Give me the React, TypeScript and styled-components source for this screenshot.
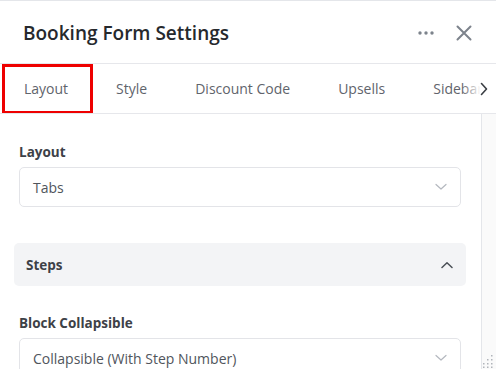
import React from "react";
import styled, { createGlobalStyle } from "styled-components";

const Global = createGlobalStyle`
  html, body { margin: 0; padding: 0; background: #fff; }
  body { font-family: "Open Sans", "Noto Sans", sans-serif; }
  *, *::before, *::after { box-sizing: border-box; }
`;

const Panel = styled.div`
  width: 496px;
  height: 369px;
  overflow: hidden;
  border-top: 1px solid #e4e6ea;
  display: flex;
  flex-direction: column;
  background: #fff;
  position: relative;
`;

const Header = styled.div`
  height: 63px;
  display: flex;
  align-items: center;
  padding: 1px 24px 0 23px;
  border-bottom: 1px solid #e6e7eb;
`;

const Title = styled.h1`
  margin: 0;
  flex: 1;
  font-size: 19px;
  font-weight: 600;
  color: #26292d;
`;

const HeaderActions = styled.div`
  display: flex;
  align-items: center;
  gap: 22px;
`;

const IconBtn = styled.span`
  display: inline-flex;
  align-items: center;
  justify-content: center;
  color: #7d838c;
`;

const TabBar = styled.div`
  height: 50px;
  display: flex;
  align-items: stretch;
  border-bottom: 1px solid #e6e7eb;
  position: relative;
  overflow: hidden;
`;

const Tab = styled.div<{ $active?: boolean }>`
  flex: none;
  padding: 0 24px;
  display: flex;
  align-items: center;
  font-size: 14px;
  color: #5f646c;
  white-space: nowrap;
  position: relative;
  ${(p) =>
    p.$active &&
    `
    &::after {
      content: "";
      position: absolute;
      left: 2px;
      top: 0;
      width: 91px;
      height: 50px;
      border: 3px solid #ee0000;
    }
  `}
`;

const Fade = styled.div`
  position: absolute;
  right: 0;
  top: 0;
  bottom: 0;
  width: 34px;
  background: linear-gradient(to right, rgba(255,255,255,0) 0%, #fff 55%);
  display: flex;
  align-items: center;
  justify-content: flex-end;
  padding-right: 8px;
  color: #3a3e44;
`;

const Body = styled.div`
  flex: 1;
  display: flex;
  min-height: 0;
`;

const Content = styled.div`
  flex: 1;
  padding: 29px 20px 0 19px;
`;

const Scrollbar = styled.div`
  width: 15px;
  border-left: 1px solid #e4e6ea;
  background: #fafafa;
  position: relative;
`;

const Grip = styled.svg`
  position: absolute;
  right: 3px;
  bottom: 1px;
`;

const Field = styled.div`
  display: flex;
  flex-direction: column;
  gap: 6px;
`;

const Label = styled.div`
  font-size: 13.5px;
  font-weight: 700;
  color: #3d4147;
`;

const Select = styled.div`
  height: 40px;
  flex: none;
  border: 1px solid #e3e4e8;
  border-radius: 5px;
  display: flex;
  align-items: center;
  padding: 0 13px 0 13px;
  font-size: 14px;
  color: #50555c;
`;

const SelectText = styled.span`
  flex: 1;
`;

const Accordion = styled.div`
  margin: 36px -5px 28px -5px;
  height: 43px;
  background: #f3f4f6;
  border-radius: 5px;
  display: flex;
  align-items: center;
  padding: 0 13px 0 12px;
`;

const AccordionTitle = styled.span`
  flex: 1;
  font-size: 13.5px;
  font-weight: 700;
  color: #3d4147;
`;

const ChevronDown = () => (
  <svg width="12" height="8" viewBox="0 0 12 8" fill="none">
    <path d="M1 1.5 L6 6 L11 1.5" stroke="#b4b8bf" strokeWidth="1.2" strokeLinecap="round" strokeLinejoin="round" />
  </svg>
);

export default function App() {
  return (
    <>
      <Global />
      <Panel>
        <Header>
          <Title>Booking Form Settings</Title>
          <HeaderActions>
            <IconBtn>
              <svg width="16" height="4" viewBox="0 0 16 4">
                <circle cx="2" cy="2" r="1.7" fill="#7d838c" />
                <circle cx="8" cy="2" r="1.7" fill="#7d838c" />
                <circle cx="14" cy="2" r="1.7" fill="#7d838c" />
              </svg>
            </IconBtn>
            <IconBtn>
              <svg width="16" height="16" viewBox="0 0 16 16">
                <path d="M1.5 1.5 L14.5 14.5 M14.5 1.5 L1.5 14.5" stroke="#7d838c" strokeWidth="2" strokeLinecap="round" />
              </svg>
            </IconBtn>
          </HeaderActions>
        </Header>
        <TabBar>
          <Tab $active>Layout</Tab>
          <Tab>Style</Tab>
          <Tab>Discount Code</Tab>
          <Tab>Upsells</Tab>
          <Tab>Sidebar</Tab>
          <Fade>
            <svg width="8" height="14" viewBox="0 0 8 14">
              <path d="M1.5 1.5 L6.5 7 L1.5 12.5" stroke="#3a3e44" strokeWidth="1.6" fill="none" strokeLinecap="round" strokeLinejoin="round" />
            </svg>
          </Fade>
        </TabBar>
        <Body>
          <Content>
            <Field>
              <Label>Layout</Label>
              <Select>
                <SelectText>Tabs</SelectText>
                <ChevronDown />
              </Select>
            </Field>
            <Accordion>
              <AccordionTitle>Steps</AccordionTitle>
              <svg width="12" height="8" viewBox="0 0 12 8" fill="none">
                <path d="M1 6.5 L6 1.8 L11 6.5" stroke="#4a4f56" strokeWidth="1.5" strokeLinecap="round" strokeLinejoin="round" />
              </svg>
            </Accordion>
            <Field>
              <Label>Block Collapsible</Label>
              <Select>
                <SelectText>Collapsible (With Step Number)</SelectText>
                <ChevronDown />
              </Select>
            </Field>
          </Content>
          <Scrollbar>
            <Grip width="10" height="14" viewBox="0 0 10 14">
              <g fill="#b0b4ba">
                <rect x="8" y="1" width="1.5" height="1.5" />
                <rect x="8" y="5" width="1.5" height="1.5" />
                <rect x="4" y="5" width="1.5" height="1.5" />
                <rect x="8" y="9" width="1.5" height="1.5" />
                <rect x="4" y="9" width="1.5" height="1.5" />
                <rect x="0" y="9" width="1.5" height="1.5" />
                <rect x="8" y="12.5" width="1.5" height="1.5" />
                <rect x="4" y="12.5" width="1.5" height="1.5" />
                <rect x="0" y="12.5" width="1.5" height="1.5" />
              </g>
            </Grip>
          </Scrollbar>
        </Body>
      </Panel>
    </>
  );
}
